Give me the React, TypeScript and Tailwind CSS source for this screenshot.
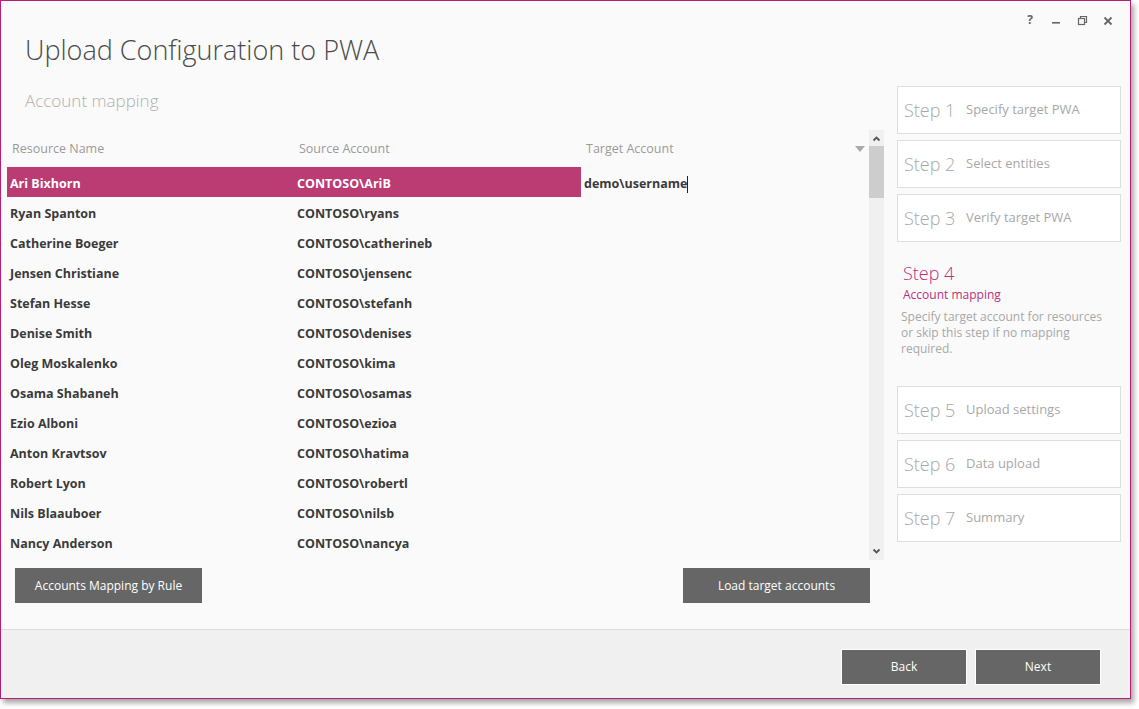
import React from 'react'

const rows: [string, string][] = [
  ['Ari Bixhorn', 'CONTOSO\\AriB'],
  ['Ryan Spanton', 'CONTOSO\\ryans'],
  ['Catherine Boeger', 'CONTOSO\\catherineb'],
  ['Jensen Christiane', 'CONTOSO\\jensenc'],
  ['Stefan Hesse', 'CONTOSO\\stefanh'],
  ['Denise Smith', 'CONTOSO\\denises'],
  ['Oleg Moskalenko', 'CONTOSO\\kima'],
  ['Osama Shabaneh', 'CONTOSO\\osamas'],
  ['Ezio Alboni', 'CONTOSO\\ezioa'],
  ['Anton Kravtsov', 'CONTOSO\\hatima'],
  ['Robert Lyon', 'CONTOSO\\robertl'],
  ['Nils Blaauboer', 'CONTOSO\\nilsb'],
  ['Nancy Anderson', 'CONTOSO\\nancya'],
]

const stepsTop = [
  ['Step 1', 'Specify target PWA'],
  ['Step 2', 'Select entities'],
  ['Step 3', 'Verify target PWA'],
]
const stepsBottom = [
  ['Step 5', 'Upload settings'],
  ['Step 6', 'Data upload'],
  ['Step 7', 'Summary'],
]

function StepBox({ num, label }: { num: string; label: string }) {
  return (
    <div className="h-[48px] border border-[#dedede] bg-white flex items-center pl-[6px]">
      <span className="text-[18px] font-light text-[#a8a8a8] w-[62px]">{num}</span>
      <span className="text-[13px] text-[#a8a8a8]">{label}</span>
    </div>
  )
}

export default function App() {
  return (
    <div className="w-[1139px] h-[709px] bg-white" style={{ fontFamily: '"Open Sans", "Noto Sans", sans-serif' }}>
      <div className="w-[1131px] h-[699px] border border-[#b81d73] bg-[#fafafa] flex flex-col shadow-[3px_4px_5px_rgba(0,0,0,0.35)]">
        {/* title bar */}
        <div className="h-[29px] flex justify-end items-end pr-[15px] pb-[2px] gap-[12px] text-[#666]">
          <span className="w-[14px] text-center text-[12px] font-bold leading-[16px]">?</span>
          <svg width="14" height="16" viewBox="0 0 14 16"><rect x="3" y="10" width="8" height="1.6" fill="#666" /></svg>
          <svg width="14" height="16" viewBox="0 0 14 16" fill="none" stroke="#666" strokeWidth="1.2">
            <rect x="3.5" y="6.5" width="6" height="6" />
            <path d="M5.5 6.5V4.5h6v6h-2" />
          </svg>
          <svg width="14" height="16" viewBox="0 0 14 16" stroke="#666" strokeWidth="1.8">
            <path d="M3.5 5.5l7 7M10.5 5.5l-7 7" />
          </svg>
        </div>

        <div className="flex flex-1">
          {/* left column */}
          <div className="w-[883px] flex flex-col">
            <div className="pl-[24px] mt-[3px] text-[27px] font-light leading-[33px] text-[#4a4a4a]">Upload Configuration to PWA</div>
            <div className="pl-[24px] mt-[23px] text-[17px] font-light leading-[24px] text-[#b0b0b0]">Account mapping</div>

            <div className="mt-[17px] h-[430px] flex">
              <div className="w-[862px] ml-[6px] flex flex-col">
                <div className="h-[37px] pt-[1px] flex items-center text-[12.5px] text-[#9a9a9a]">
                  <div className="w-[287px] pl-[5px]">Resource Name</div>
                  <div className="w-[287px] pl-[5px]">Source Account</div>
                  <div className="flex-1 pl-[5px] flex items-center justify-between pr-[4px]">
                    <span>Target Account</span>
                    <svg width="10" height="6" viewBox="0 0 10 6"><path d="M0 0h10L5 6z" fill="#aaa" /></svg>
                  </div>
                </div>
                {rows.map(([name, acc], i) => (
                  <div key={name} className="h-[30px] flex items-stretch text-[12.5px] font-bold text-[#3a3a3a]">
                    <div className={`w-[574px] flex items-center pt-[4px] ${i === 0 ? 'bg-[#bb3b73] text-white' : ''}`}>
                      <div className="w-[287px] pl-[3px]">{name}</div>
                      <div className="w-[287px] pl-[3px]">{acc}</div>
                    </div>
                    <div className="flex-1 pl-[3px] pt-[4px] flex items-center">
                      {i === 0 && (
                        <>
                          <span>demo\username</span>
                          <span className="w-px h-[17px] bg-[#222]" />
                        </>
                      )}
                    </div>
                  </div>
                ))}
              </div>
              {/* scrollbar */}
              <div className="w-[15px] bg-[#f0f0f0] flex flex-col items-center">
                <svg className="mt-[3px]" width="15" height="12" viewBox="0 0 15 12" fill="none" stroke="#555" strokeWidth="1.8">
                  <path d="M4.5 7.5l3-3 3 3" />
                </svg>
                <div className="w-[15px] h-[52px] mt-[1px] bg-[#cdcdcd]" />
                <div className="flex-1" />
                <svg className="mb-[3px]" width="15" height="12" viewBox="0 0 15 12" fill="none" stroke="#555" strokeWidth="1.8">
                  <path d="M4.5 4.5l3 3 3-3" />
                </svg>
              </div>
            </div>

            <div className="mt-[8px] flex justify-between pl-[14px] pr-[14px]">
              <button className="w-[187px] h-[35px] bg-[#666] text-white text-[12px]">Accounts Mapping by Rule</button>
              <button className="w-[187px] h-[35px] bg-[#666] text-white text-[12px]">Load target accounts</button>
            </div>
          </div>

          {/* right column */}
          <div className="w-[224px] ml-[13px] pt-[56px] flex flex-col">
            <div className="flex flex-col gap-[6px]">
              {stepsTop.map(([n, l]) => <StepBox key={n} num={n} label={l} />)}
            </div>
            <div className="h-[144px] pl-[6px] pt-[19px]">
              <div className="text-[18px] font-light leading-[24px] text-[#b8307c]">Step 4</div>
              <div className="text-[12px] leading-[20px] text-[#b8307c]">Account mapping</div>
              <div className="mt-[4px] -ml-[2px] text-[12px] leading-[16px] text-[#a8a8a8] w-[214px]">
                Specify target account for resources or skip this step if no mapping required.
              </div>
            </div>
            <div className="flex flex-col gap-[6px]">
              {stepsBottom.map(([n, l]) => <StepBox key={n} num={n} label={l} />)}
            </div>
          </div>
        </div>

        {/* footer */}
        <div className="h-[69px] border-t border-[#dcdcdc] bg-[#f0f0f0] flex justify-end items-center gap-[8px] pr-[29px] pt-[6px]">
          <button className="w-[126px] h-[36px] bg-[#666] border border-white text-white text-[12px]">Back</button>
          <button className="w-[126px] h-[36px] bg-[#666] border border-white text-white text-[12px]">Next</button>
        </div>
      </div>
    </div>
  )
}
